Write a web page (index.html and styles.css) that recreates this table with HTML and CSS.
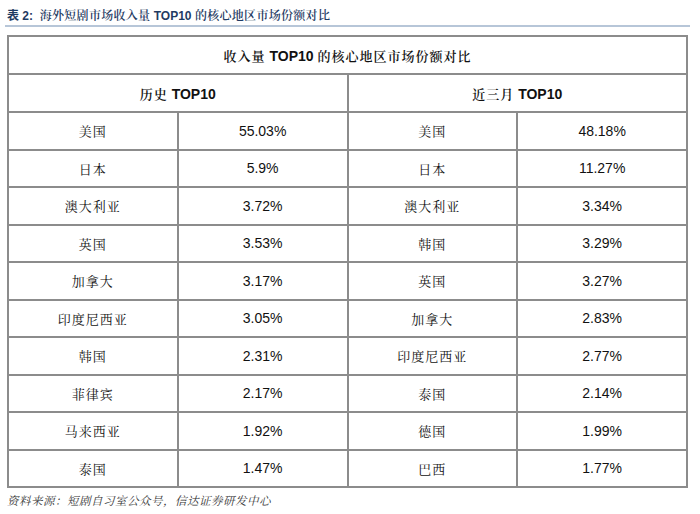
FILE: index.html
```html
<!DOCTYPE html>
<html lang="zh">
<head>
<meta charset="utf-8">
<link rel="stylesheet" href="styles.css">
</head>
<body>
<div class="page">
  <div class="caption"><b>表 2:</b>&nbsp; <span class="zh">海外短剧市场收入量</span> <b>TOP10</b> <span class="zh">的核心地区市场份额对比</span></div>
  <table class="grid">
    <colgroup><col class="c"><col class="c"><col class="c"><col class="c"></colgroup>
    <tr class="title-row"><th colspan="4"><span class="zh">收入量</span> <b>TOP10</b> <span class="zh">的核心地区市场份额对比</span></th></tr>
    <tr class="head-row"><th colspan="2"><span class="zh">历史</span> <b>TOP10</b></th><th colspan="2"><span class="zh">近三月</span> <b>TOP10</b></th></tr>
    <tr><td class="cn">美国</td><td class="num">55.03%</td><td class="cn">美国</td><td class="num">48.18%</td></tr>
    <tr><td class="cn">日本</td><td class="num">5.9%</td><td class="cn">日本</td><td class="num">11.27%</td></tr>
    <tr><td class="cn">澳大利亚</td><td class="num">3.72%</td><td class="cn">澳大利亚</td><td class="num">3.34%</td></tr>
    <tr><td class="cn">英国</td><td class="num">3.53%</td><td class="cn">韩国</td><td class="num">3.29%</td></tr>
    <tr><td class="cn">加拿大</td><td class="num">3.17%</td><td class="cn">英国</td><td class="num">3.27%</td></tr>
    <tr><td class="cn">印度尼西亚</td><td class="num">3.05%</td><td class="cn">加拿大</td><td class="num">2.83%</td></tr>
    <tr><td class="cn">韩国</td><td class="num">2.31%</td><td class="cn">印度尼西亚</td><td class="num">2.77%</td></tr>
    <tr><td class="cn">菲律宾</td><td class="num">2.17%</td><td class="cn">泰国</td><td class="num">2.14%</td></tr>
    <tr><td class="cn">马来西亚</td><td class="num">1.92%</td><td class="cn">德国</td><td class="num">1.99%</td></tr>
    <tr><td class="cn">泰国</td><td class="num">1.47%</td><td class="cn">巴西</td><td class="num">1.77%</td></tr>
  </table>
  <div class="source">资料来源：短剧自习室公众号，信达证券研发中心</div>
</div>
</body>
</html>
```

FILE: styles.css
```css
html, body {
  margin: 0;
  padding: 0;
  background: #ffffff;
}
.page {
  width: 700px;
  height: 514px;
  font-family: "Liberation Sans", "Noto Sans CJK SC", sans-serif;
}
.zh {
  font-family: "Noto Serif CJK SC", "Noto Sans CJK SC", serif;
  letter-spacing: 1px;
}
.caption {
  margin: 0 10px 0 5px;
  padding: 6px 0 2px 2px;
  height: 17px;
  line-height: 17px;
  font-size: 12px;
  font-weight: normal;
  color: #1f3b63;
  border-bottom: 2px solid #b7c6d8;
}
.caption .zh {
  font-weight: 600;
  letter-spacing: 0.3px;
}
.caption b {
  font-weight: bold;
}
.grid {
  margin: 8px 0 0 7px;
  border-collapse: collapse;
  width: 681px;
  table-layout: fixed;
  color: #111;
}
.grid th, .grid td {
  border: 2px solid #8c8c8c;
  text-align: center;
  padding: 0;
}
.title-row th, .head-row th {
  height: 36px;
  font-size: 14px;
  font-weight: normal;
}
.grid th .zh {
  font-size: 13px;
  font-weight: 600;
}
.grid th b {
  font-weight: bold;
}
.grid td {
  height: 35.5px;
}
.cn {
  font-family: "Noto Serif CJK SC", "Noto Sans CJK SC", serif;
  font-size: 13px;
  letter-spacing: 1px;
}
.num {
  font-family: "Liberation Sans", sans-serif;
  font-size: 14px;
}
.source {
  margin: 4px 0 0 7px;
  font-size: 11.5px;
  font-style: italic;
  color: #333;
  font-family: "Noto Serif CJK SC", "Noto Sans CJK SC", serif;
  letter-spacing: 0.5px;
}
```
